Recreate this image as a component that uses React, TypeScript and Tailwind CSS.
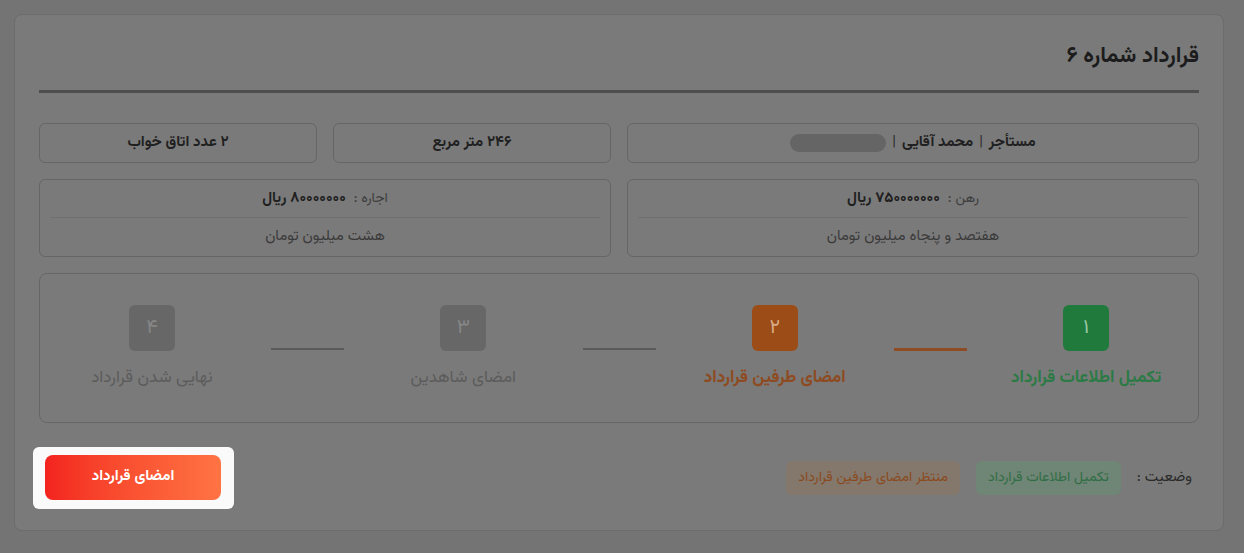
import React from "react";

const FONT = { fontFamily: '"Vazirmatn", "Noto Sans Arabic", "DejaVu Sans", sans-serif' };

type StepState = "done" | "current" | "todo";

const STEPS: { n: string; label: string; state: StepState }[] = [
  { n: "۱", label: "تکمیل اطلاعات قرارداد", state: "done" },
  { n: "۲", label: "امضای طرفین قرارداد", state: "current" },
  { n: "۳", label: "امضای شاهدین", state: "todo" },
  { n: "۴", label: "نهایی شدن قرارداد", state: "todo" },
];

const BOX = { done: "bg-[#1f7a3c] text-[#9cc7a7]", current: "bg-[#9c4c16] text-[#d8ab86]", todo: "bg-[#676767] text-[#868686]" };
const LABEL = { done: "text-[#2c7a45] font-bold", current: "text-[#8e4a20] font-bold", todo: "text-[#5c5c5c]" };

export default function App() {
  return (
    <div dir="rtl" style={FONT} className="w-full h-[553px] bg-[#747474] pt-[14px] pl-[14px] pr-[20px] overflow-hidden">
      <div className="h-[517px] bg-[#7a7a7a] border border-[#6c6c6c] rounded-lg px-6 pt-[26px]">
        <h1 className="text-[22px] leading-8 font-bold text-[#1c1c1c]">قرارداد شماره ۶</h1>
        <div className="mt-[17px] h-[3px] bg-[#4e4e4e]" />

        <div className="mt-[30px] grid grid-cols-4 gap-4">
          <div className="col-span-2 h-10 border border-[#666] rounded-md flex items-center justify-center gap-1.5 text-[15px] font-bold text-[#202020]">
            <span>مستأجر</span>
            <span className="font-normal text-[#2a2a2a]">|</span>
            <span>محمد آقایی</span>
            <span className="font-normal text-[#2a2a2a]">|</span>
            <span className="w-24 h-[18px] rounded-full bg-[#656565]" />
          </div>
          <Cell text="۲۴۶ متر مربع" />
          <Cell text="۲ عدد اتاق خواب" />

          <Money label="رهن" value="۷۵۰۰۰۰۰۰۰ ریال" words="هفتصد و پنجاه میلیون تومان" />
          <Money label="اجاره" value="۸۰۰۰۰۰۰۰ ریال" words="هشت میلیون تومان" />
        </div>

        <div className="mt-4 h-[150px] border border-[#666] rounded-lg px-[32px] pt-[31px] flex">
          {STEPS.map((s, i) => (
            <React.Fragment key={s.n}>
              {i > 0 && (
                <div className="w-[152px] flex justify-center pt-[43px]">
                  <div className={i === 1 ? "w-[73px] h-[3px] bg-[#8f4c24]" : "w-[73px] h-[2px] bg-[#5a5a5a]"} />
                </div>
              )}
              <div className="w-[160px] flex flex-col items-center">
                <div className={`w-[46px] h-[46px] rounded-md flex items-center justify-center text-xl ${BOX[s.state]}`}>{s.n}</div>
                <div className={`mt-[15px] text-[17px] leading-6 whitespace-nowrap ${LABEL[s.state]}`}>{s.label}</div>
              </div>
            </React.Fragment>
          ))}
        </div>

        <div className="mt-6 flex items-center justify-between">
          <div className="flex items-center gap-4 pr-[7px] text-sm">
            <span className="text-[#2a2a2a] text-[15px]">وضعیت :</span>
            <span className="h-[34px] px-3 rounded-md bg-[#6f8575] text-[#2f6e45] flex items-center">تکمیل اطلاعات قرارداد</span>
            <span className="h-[34px] px-3 rounded-md bg-[#84786c] text-[#8a4a1e] flex items-center">منتظر امضای طرفین قرارداد</span>
          </div>
          <div className="-ml-[6px] bg-[#fafafa] rounded-md pl-[12px] pr-[13px] pt-2 pb-[9px]">
            <button className="w-[176px] h-[45px] rounded-lg bg-gradient-to-r from-[#f3221f] to-[#ff7343] text-white text-[15px] font-bold">
              امضای قرارداد
            </button>
          </div>
        </div>
      </div>
    </div>
  );
}

function Cell({ text }: { text: string }) {
  return <div className="h-10 border border-[#666] rounded-md flex items-center justify-center text-[15px] font-bold text-[#202020]">{text}</div>;
}

function Money({ label, value, words }: { label: string; value: string; words: string }) {
  return (
    <div className="col-span-2 h-[78px] border border-[#666] rounded-md px-[10px] flex flex-col">
      <div className="h-[38px] flex items-center justify-center gap-2 text-sm border-b border-[#6f6f6f]">
        <span className="text-[#3d3d3d]">{label} :</span>
        <span className="font-bold text-[15px] text-[#1f1f1f]">{value}</span>
      </div>
      <div className="flex-1 flex items-center justify-center text-[15px] text-[#3a3a3a]">{words}</div>
    </div>
  );
}
